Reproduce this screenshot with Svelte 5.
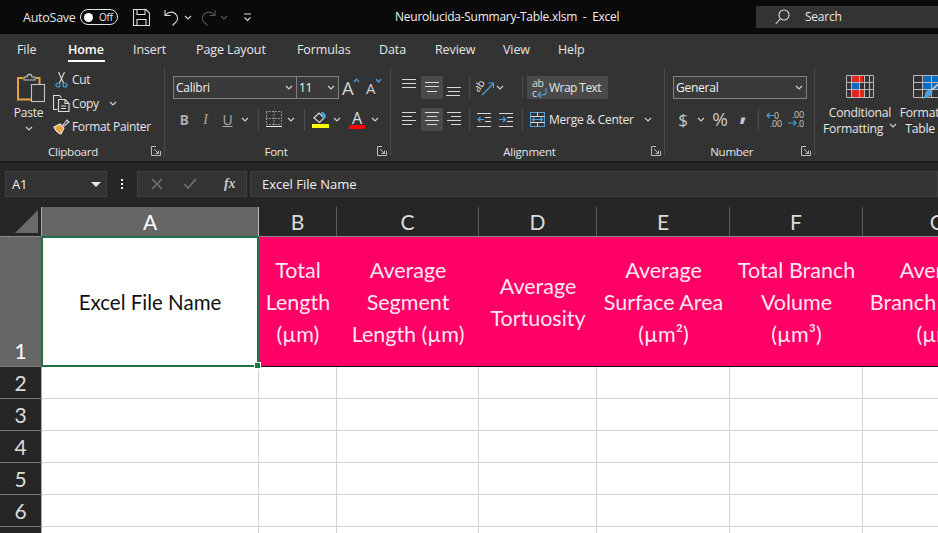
<script>
  const tabs = [
    { t: 'File', w: 51 }, { t: 'Home', w: 65, on: true }, { t: 'Insert', w: 63 }, { t: 'Page Layout', w: 101 },
    { t: 'Formulas', w: 82 }, { t: 'Data', w: 56 }, { t: 'Review', w: 68 }, { t: 'View', w: 55 }, { t: 'Help', w: 50 }
  ];
  const cols = [
    { l: 'A', w: 217, sel: true }, { l: 'B', w: 78 }, { l: 'C', w: 142 }, { l: 'D', w: 118 },
    { l: 'E', w: 133 }, { l: 'F', w: 133 }, { l: 'G', w: 150 }
  ];
  const head = [
    ['Total', 'Length', '(µm)'], ['Average', 'Segment', 'Length (µm)'], ['Average', 'Tortuosity'],
    ['Average', 'Surface Area', '(µm²)'], ['Total Branch', 'Volume', '(µm³)'], ['Average', 'Branch Length', '(µm)']
  ];
  const rows = [2, 3, 4, 5, 6, 7];
</script>

{#snippet chev()}
  <svg class="chev" width="8" height="5" viewBox="0 0 8 5"><path d="M1 1l3 3 3-3" /></svg>
{/snippet}
{#snippet launcher()}
  <svg class="launch" width="10" height="10" viewBox="0 0 10 10">
    <path d="M9.500 5v4.500H.5V.5h4.500" /><path d="M3 3l4.500 4.500M7.500 4.500v3h-3" />
  </svg>
{/snippet}
{#snippet lines(ys, xs)}
  <svg class="ln" width="18" height="23" viewBox="0 0 18 23">
    {#each ys as y, i}<path d="M{xs[i][0]} {y}.5H{xs[i][1]}" />{/each}
  </svg>
{/snippet}

<div class="app">
  <header class="title">
    <span class="autosave">AutoSave</span>
    <span class="toggle"><i></i><b>Off</b></span>
    <svg class="ic save" width="17" height="17" viewBox="0 0 17 17"><path d="M.5.5h12.500l3.500 3.500v12.500H.5zM4 .5v5h8v-5M4 16.500v-6h9v6" /></svg>
    <svg class="ic undo" width="16" height="17" viewBox="0 0 16 17"><path d="M1 1v5.500h5.500M1 6.500C4 3 8 2.500 11 4.500c3.500 2.500 3.500 7 0 9.500l-2.500 2.500" /></svg>
    {@render chev()}
    <svg class="ic redo" width="16" height="17" viewBox="0 0 16 17"><path d="M15 1v5.500H9.500M15 6.500C12 3 8 2.500 5 4.500c-3.500 2.500-3.500 7 0 9.500l2.500 2.500" /></svg>
    <svg class="chev dim" width="8" height="5" viewBox="0 0 8 5"><path d="M1 1l3 3 3-3" /></svg>
    <svg class="ic custom" width="9" height="9" viewBox="0 0 9 9"><path d="M1 1h7M1.500 4.500l3 3 3-3" /></svg>
    <span class="doc">Neurolucida-Summary-Table.xlsm &nbsp;-&nbsp; Excel</span>
    <div class="search">
      <svg class="ic" width="15" height="16" viewBox="0 0 15 16"><circle cx="9" cy="6" r="5" /><path d="M5.500 9.500L.8 15" /></svg>
      <span>Search</span>
    </div>
  </header>

  <nav class="tabs">
    {#each tabs as tab}
      <span class="tab" class:on={tab.on} style="width:{tab.w}px"><span>{tab.t}</span></span>
    {/each}
  </nav>

  <section class="ribbon">
    <div class="group clip">
      <div class="tools clip-tools">
        <div class="paste">
          <svg class="paste-ic" width="30" height="31" viewBox="0 0 30 31">
            <path class="orange" d="M7 6H2v21.500h13M20 6h3.500v6" />
            <path class="gray" d="M8 8V5h3c0-3.500 5-3.500 5 0h3v3z" />
            <rect class="gray" x="15.500" y="12.500" width="13" height="17" />
          </svg>
          <span>Paste</span>
          {@render chev()}
        </div>
        <div class="clip-list">
          <div class="row">
            <svg class="ic" width="17" height="17" viewBox="0 0 17 17">
              <path d="M5.500 1l5 11M11.500 1l-5 11" /><circle class="blue" cx="5" cy="14" r="2" /><circle class="blue" cx="12" cy="14" r="2" />
            </svg>
            <span>Cut</span>
          </div>
          <div class="row">
            <svg class="ic" width="17" height="17" viewBox="0 0 17 17">
              <path d="M4.500 14.500H.5V.5h6l2 2.500" /><path d="M5.500 4.500h6.500l4 4v8H5.500zM12 4.500v4h4M8 11h5M8 13.500h5" />
            </svg>
            <span>Copy</span>
            <span class="copy-chev">{@render chev()}</span>
          </div>
          <div class="row">
            <svg class="ic" width="17" height="17" viewBox="0 0 17 17">
              <path d="M10 7l4-5 2 2-5 4zM10 7l1 1" /><path class="painter" d="M1 9l6-3 4 4-3 6c-2 0-6-4-7-7z" />
            </svg>
            <span>Format Painter</span>
          </div>
        </div>
      </div>
      <div class="label"><i></i><span>Clipboard</span>{@render launcher()}</div>
    </div>

    <div class="group font">
      <div class="tools">
        <div class="font-top">
          <div class="combo c-font"><span>Calibri</span>{@render chev()}</div>
          <div class="combo c-size"><span>11</span>{@render chev()}</div>
          <span class="grow big">A<svg class="caret" width="7" height="5" viewBox="0 0 7 5"><path d="M1 4l2.500-3L6 4" /></svg></span>
          <span class="grow small">A<svg class="caret" width="7" height="5" viewBox="0 0 7 5"><path d="M1 1l2.500 3L6 1" /></svg></span>
        </div>
        <div class="font-bot">
          <b class="fmt">B</b><i class="fmt it">I</i><u class="fmt un">U</u>{@render chev()}
          <em class="sep"></em>
          <svg width="16" height="17" viewBox="0 0 16 17"><path class="dots" d="M.5.500h15v13H.5zM8 .5v13M.5 7.500h15" /><path class="ln-w" d="M0 15.500h16" /></svg>
          {@render chev()}
          <em class="sep"></em>
          <svg width="17" height="18" viewBox="0 0 17 18">
            <path class="ic-p" d="M2 7l5-5 5 5-4.500 4.500z" /><path class="blue-p" d="M9 1c3 0 5 2 5 5l-2 2-3-5z" /><rect class="yellow" x="0" y="13" width="17" height="4" />
          </svg>
          {@render chev()}
          <span class="fc"><span>A</span></span>
          {@render chev()}
        </div>
      </div>
      <div class="label"><i></i><span>Font</span>{@render launcher()}</div>
    </div>

    <div class="group align">
      <div class="tools">
        <div class="al-grid">
          <span class="ac">{@render lines([3, 7, 11], [[1, 15], [1, 15], [1, 15]])}</span>
          <span class="ac on">{@render lines([6, 10, 15], [[2, 16], [2, 16], [4, 14]])}</span>
          <span class="ac">{@render lines([11, 15, 19], [[2, 16], [3, 15], [1, 15]])}</span>
          <em class="sep"></em>
          <svg class="orient" width="18" height="20" viewBox="0 0 18 20">
            <text x="-2" y="12" transform="rotate(-55 3 9)">ab</text>
            <path class="blue" d="M6 17L17 6M12.500 5H17.500v5" />
          </svg>
          <span class="or-chev">{@render chev()}</span>
          <em class="sep"></em>
          <div class="wrap on">
            <svg class="wrap-ic" width="16" height="20" viewBox="0 0 16 20">
              <text x="0" y="9">ab</text><text x="0" y="19">c</text>
              <path class="blue" d="M14 10v4c0 2-1 3-3 3H6.500M9 14l-3 3 3 3" />
            </svg>
            <span class="wrap-txt">Wrap Text</span>
          </div>

          <span class="ac">{@render lines([4, 8, 12, 16], [[1, 15], [1, 11], [1, 15], [1, 11]])}</span>
          <span class="ac on">{@render lines([4, 8, 12, 16], [[2, 16], [4, 14], [2, 16], [4, 14]])}</span>
          <span class="ac">{@render lines([4, 8, 12, 16], [[2, 16], [6, 16], [2, 16], [6, 16]])}</span>
          <em class="sep"></em>
          <svg class="indent" width="15" height="16" viewBox="0 0 15 16"><path d="M0 1.500h14M8 5.500h6M8 9.500h6M0 14.500h14" /><path class="blue" d="M7 7.500H1M3.500 5l-2.500 2.500 2.500 2.500" /></svg>
          <svg class="indent" width="15" height="16" viewBox="0 0 15 16"><path d="M0 1.500h14M8 5.500h6M8 9.500h6M0 14.500h14" /><path class="blue" d="M0 7.500h6M4 5l2.500 2.500L4 10" /></svg>
          <em class="sep"></em>
          <div class="wrap merge">
            <svg class="merge-ic" width="15" height="15" viewBox="0 0 15 15">
              <path class="blue" d="M.5.500h14v14H.5z" /><path d="M.5 4.500h14M.5 10.500h14M7.500.5v4M7.500 10.500v4" /><path class="blue" d="M3 7.500h9M4.500 5.500l-2 2 2 2M10.500 5.500l2 2-2 2" />
            </svg>
            <span>Merge &amp; Center</span>
            {@render chev()}
          </div>
        </div>
      </div>
      <div class="label"><i></i><span>Alignment</span>{@render launcher()}</div>
    </div>

    <div class="group number">
      <div class="tools">
        <div class="combo c-num"><span>General</span>{@render chev()}</div>
        <div class="num-bot">
          <span class="sym dollar">$</span>
          {@render chev()}
          <span class="sym pct">%</span>
          <span class="sym comma">,</span>
          <em class="sep"></em>
          <svg class="dec" width="16" height="17" viewBox="0 0 16 17">
            <text x="8" y="8">0</text><text x="4" y="16">.00</text><path class="blue" d="M8 4.500H1M3.500 2L1 4.500 3.500 7" />
          </svg>
          <svg class="dec" width="16" height="17" viewBox="0 0 16 17">
            <text x="4" y="7">.00</text><text x="9" y="16">.0</text><path class="blue" d="M0 12h8M5.500 9.500L8 12l-2.500 2.500" />
          </svg>
        </div>
      </div>
      <div class="label"><i></i><span>Number</span>{@render launcher()}</div>
    </div>

    <div class="group styles">
      <div class="big-btn cf">
        <svg width="28" height="23" viewBox="0 0 28 23">
          <rect class="red" x="5" y="1" width="12" height="7" /><rect class="bl" x="5" y="8" width="8" height="7" /><rect class="red" x="5" y="15" width="14" height="7" />
          <path class="grid" d="M.5.500h27v22H.5zM.5 7.500h27M.5 14.500h27M5.500.5v22M13.500.5v22M18.500.5v22M23.500.5v22" />
        </svg>
        <span>Conditional</span>
        <span>Formatting {@render chev()}</span>
      </div>
      <div class="big-btn ft">
        <svg width="28" height="26" viewBox="0 0 28 26">
          <rect class="bl" x="9" y="8" width="19" height="7" /><rect class="bl" x="9" y="1" width="19" height="7" />
          <path class="grid" d="M.5.500h27v22H.5zM.5 7.500h27M.5 14.500h27M9.500.5v22M18.500.5v22" />
          <path class="brush" d="M28 7L16 17" /><path class="bl-p" d="M16 15c3 0 4 2 3 4-2 3-6 4-10 5 1-1 3-3 3-5s2-4 4-4z" />
        </svg>
        <span>Format as</span>
        <span>Table {@render chev()}</span>
      </div>
    </div>
  </section>

  <section class="fbar">
    <div class="name"><span>A1</span><svg width="10" height="5" viewBox="0 0 10 5"><path d="M0 0h10L5 5z" /></svg></div>
    <div class="kebab"><i></i><i></i><i></i></div>
    <div class="fbtns">
      <svg width="12" height="12" viewBox="0 0 12 12"><path d="M1 1l10 10M11 1L1 11" /></svg>
      <svg width="14" height="12" viewBox="0 0 14 12"><path d="M1 6l4 4 8-9" /></svg>
      <span>fx</span>
    </div>
    <div class="finput">Excel File Name</div>
  </section>

  <section class="sheet">
    <div class="line colhead">
      <div class="corner"><svg width="23" height="23" viewBox="0 0 23 23"><path d="M23 0v23H0z" /></svg></div>
      {#each cols as c}
        <div class="ch" class:sel={c.sel} style="width:{c.w}px">{c.l}</div>
      {/each}
    </div>
    <div class="line r1">
      <div class="rh sel">1</div>
      <div class="cell a1">Excel File Name<span class="handle"></span></div>
      {#each head as h, i}
        <div class="cell pink" style="width:{cols[i + 1].w}px">
          {#each h as l}<span>{l}</span>{/each}
        </div>
      {/each}
    </div>
    {#each rows as r}
      <div class="line rn">
        <div class="rh">{r}</div>
        {#each cols as c}<div class="cell blank" style="width:{c.w}px"></div>{/each}
      </div>
    {/each}
  </section>
</div>

<style>
  :global(body) { margin: 0; background: #fff; }
  .app {
    width: 938px; height: 533px; overflow: hidden; display: flex; flex-direction: column;
    font-family: "Open Sans", "Noto Sans", sans-serif; font-size: 12px; letter-spacing: -0.25px; color: #e6e6e6;
  }
  svg { display: block; flex: none; fill: none; }
  em { font-style: normal; }
  .chev path { stroke: #cfcfcf; stroke-width: 1.2; fill: none; }
  .chev.dim path { stroke: #555; }
  .ic path, .ic circle { stroke: #dcdcdc; stroke-width: 1.1; }
  .blue, .ic .blue { stroke: #4a9fdc; stroke-width: 1.2; fill: none; }

  /* title */
  .title { height: 34px; flex: none; background: #0a0a0a; display: flex; align-items: center; padding-left: 23px; position: relative; box-sizing: border-box; }
  .autosave { font-size: 12.500px; width: 57px; }
  .toggle { width: 38px; height: 16px; box-sizing: border-box; border: 1px solid #e6e6e6; border-radius: 9px; display: flex; align-items: center; padding-left: 3px; }
  .toggle i { width: 9px; height: 9px; border-radius: 50%; background: #fff; }
  .toggle b { font-weight: 400; font-size: 10px; margin-left: 6px; }
  .save { margin-left: 15px; }
  .undo { margin-left: 14px; margin-right: 4px; }
  .redo { margin-left: 8px; margin-right: 4px; }
  .redo path { stroke: #555; }
  .custom { margin-left: 15px; }
  .doc { position: absolute; left: 395px; top: 8px; font-size: 12px; color: #f0f0f0; }
  .search { margin-left: auto; width: 182px; height: 22px; margin-top: -1px; background: #333; display: flex; align-items: center; padding-left: 19px; box-sizing: border-box; gap: 15px; }
  .search span { font-size: 12px; }

  /* tabs */
  .tabs { height: 34px; flex: none; background: #333; display: flex; padding-left: 17px; box-sizing: border-box; }
  .tab { flex: none; display: block; padding-top: 7px; font-size: 12.500px; letter-spacing: -0.1px; box-sizing: border-box; }
  .tab span { display: inline-block; height: 18px; line-height: 18px; }
  .tab.on span { font-weight: 600; color: #fff; border-bottom: 2px solid #fff; padding-bottom: 1px; padding-right: 1px; }

  /* ribbon */
  .ribbon { height: 93px; flex: none; background: #333; display: flex; }
  .group { flex: none; display: flex; flex-direction: column; box-sizing: border-box; border-right: 1px solid #4a4a4a; height: 88px; }
  .tools { flex: 1; padding-top: 8px; box-sizing: border-box; min-height: 0; }
  .label { display: grid; grid-template-columns: 1fr auto 1fr; align-items: center; height: 18px; margin-bottom: -4px; font-size: 11.500px; padding-right: 3px; flex: none; }
  .launch { justify-self: end; }
  .launch path { stroke: #bdbdbd; stroke-width: 1; }
  .row { display: flex; align-items: center; height: 23.500px; gap: 2px; }

  .clip { width: 165px; }
  .clip .label { grid-template-columns: 48fr auto 63fr; }
  .clip-tools { display: flex; padding-top: 0; }
  .paste { width: 53px; display: flex; flex-direction: column; align-items: center; padding-left: 4px; padding-top: 4px; box-sizing: border-box; }
  .paste-ic { margin-left: 5px; }
  .paste span { margin-top: 1px; line-height: 18px; }
  .paste .chev { margin-top: 4px; }
  .orange { stroke: #e8a33d; stroke-width: 2; }
  .gray { stroke: #c4c4c4; stroke-width: 1.1; }
  .clip-list { letter-spacing: -0.35px; }
  .copy-chev { margin-left: 8px; }
  .painter { fill: #e8a33d; stroke: #e8e8e8 !important; }

  .font { width: 226px; }
  .font .tools { padding-left: 8px; }
  .font-top { display: flex; align-items: center; height: 23px; }
  .combo { height: 23px; box-sizing: border-box; border: 1px solid #808080; display: flex; align-items: center; justify-content: space-between; padding: 0 3px 0 2px; background: #3a3a3a; color: #f2f2f2; }
  .c-font { width: 124px; }
  .c-size { width: 43px; margin-left: -1px; }
  .grow { display: flex; color: #d0d0d0; line-height: 20px; }
  .grow.big { font-size: 18.500px; margin-left: 3px; width: 24px; }
  .grow.small { font-size: 15px; width: 18px; }
  .caret path { stroke: #4a9fdc; stroke-width: 1.2; }
  .font-bot { display: grid; grid-template-columns: 22px 21px 23px 12px 14px 18px 15px 12px 20px 14px 26px 9px; align-items: center; justify-items: center; height: 23px; margin-top: 9px; }
  .fmt { font-size: 14px; color: #aaa; font-style: normal; text-decoration: none; }
  .it { font-family: "Liberation Serif", serif; font-style: italic; font-weight: 400; }
  .un { text-decoration: underline; font-weight: 400; }
  .sep { display: block; width: 1px; height: 21px; background: #4f4f4f; }
  .dots { stroke: #e6e6e6; stroke-dasharray: 1 2; }
  .ln-w { stroke: #eee; }
  .ic-p { stroke: #ddd; fill: #333; stroke-width: 1.1; }
  .blue-p { fill: #4a9fdc; }
  .yellow { fill: #ffff00; }
  .fc { display: flex; flex-direction: column; align-items: center; width: 16px; }
  .fc span { font-size: 16px; line-height: 16px; color: #ddd; display: block; width: 16px; text-align: center; border-bottom: 4px solid #ff0000; height: 15px; }

  .align { width: 274px; padding-left: 7px; }
  .al-grid { display: grid; grid-template-columns: 23px 22px 21px 10px 21px 22px 10px auto; grid-template-rows: 23px 23px; row-gap: 9px; align-items: center; justify-items: center; }
  .ac { width: 100%; height: 23px; display: flex; align-items: center; justify-content: center; }
  .ac.on { background: #4a4a4a; }
  .ln path { stroke: #d8d8d8; stroke-width: 1; }
  .orient text { font-size: 10.500px; fill: #ddd; }
  .or-chev { justify-self: start; margin-left: 1px; }
  .wrap { justify-self: start; display: flex; align-items: center; height: 23px; width: 81px; padding-left: 5px; box-sizing: border-box; gap: 1px; }
  .wrap.on { background: #4a4a4a; }
  .wrap-txt { letter-spacing: -0.55px; }
  .wrap-ic text { font-size: 10.500px; fill: #ddd; }
  .indent path { stroke: #d8d8d8; }
  .indent .blue { stroke: #4a9fdc; stroke-width: 1.2; }
  .merge { width: 128px; padding-left: 3px; gap: 4px; }
  .merge .chev { margin-left: 6px; }
  .merge-ic path { stroke: #d8d8d8; }
  .merge-ic .blue { stroke: #4a9fdc; stroke-width: 1.2; }

  .number { width: 150px; padding-left: 8px; }
  .number .label { grid-template-columns: 38fr auto 59fr; }
  .c-num { width: 134px; }
  .num-bot { display: grid; grid-template-columns: 20px 16px 22px 24px 6px 25px 20px; margin-top: 9px; height: 23px; align-items: center; justify-items: center; }
  .sym { color: #c8c8c8; font-size: 17px; line-height: 23px; }
  .pct { font-size: 19px; }
  .comma { font-weight: 700; font-size: 27px; line-height: 14px; height: 23px; margin-top: -9px; }
  .dec text { font-size: 9px; fill: #ccc; }

  .styles { border: 0; flex-direction: row; padding-top: 7px; padding-left: 7px; }
  .big-btn { flex: none; display: flex; flex-direction: column; align-items: center; line-height: 16px; font-size: 12.200px; }
  .big-btn svg:first-child { margin-bottom: 7px; }
  .big-btn span { display: flex; align-items: center; gap: 3px; white-space: pre; }
  .cf { width: 76px; }
  .ft { width: 58px; }
  .ft svg:first-child { margin-bottom: 4px; }
  .red { fill: #e0281e; }
  .bl { fill: #0b6cc4; }
  .grid { stroke: #b8b8b8; stroke-width: 1; }
  .brush { stroke: #c4c4c4; stroke-width: 2; }
  .bl-p { fill: #4a9fdc; }

  /* formula */
  .fbar { height: 46px; flex: none; background: #262626; border-top: 2px solid #1b1b1b; box-sizing: border-box; display: flex; align-items: flex-start; padding: 8px 0 0 5px; }
  .name, .fbtns, .finput { height: 26px; box-sizing: border-box; background: #333; border: 1px solid #3f3f3f; display: flex; align-items: center; font-size: 13px; }
  .name { width: 102px; padding: 0 5px 0 6px; justify-content: space-between; color: #f0f0f0; }
  .name path { fill: #e8e8e8; }
  .kebab { width: 30px; height: 26px; display: flex; flex-direction: column; align-items: center; justify-content: center; gap: 2px; }
  .kebab i { width: 2px; height: 2px; background: #eee; }
  .fbtns { width: 110px; padding-left: 13px; gap: 20px; }
  .fbtns path { stroke: #666; stroke-width: 2; }
  .fbtns span { font-family: "Liberation Serif", serif; font-style: italic; font-weight: 700; margin-left: 7px; font-size: 14px; color: #c8c8c8; }
  .finput { margin-left: 3px; flex: 1; padding-left: 11px; letter-spacing: 0; color: #f0f0f0; }

  /* sheet */
  .sheet { flex: 1; background: #fff; font-family: Lato, "Liberation Sans", sans-serif; letter-spacing: 0; min-height: 0; }
  .line { display: flex; }
  .colhead { height: 30px; background: #262626; border-bottom: 1px solid #8a8a8a; box-sizing: border-box; }
  .corner { width: 42px; flex: none; display: flex; justify-content: flex-end; align-items: flex-end; box-sizing: border-box; padding: 0 3px 3px 0; border-right: 1px solid #aaa; }
  .corner path { fill: #6a6a6a; }
  .ch { flex: none; box-sizing: border-box; border-right: 1px solid #5a5a5a; display: flex; align-items: flex-end; justify-content: center; font-size: 21px; line-height: 29px; color: #dcdcdc; }
  .ch.sel { background: #666; border-right-color: #bbb; color: #fff; }
  .r1 { height: 130px; }
  .rn { height: 32px; }
  .rh { width: 42px; flex: none; box-sizing: border-box; background: #262626; border-right: 1px solid #aaa; border-bottom: 1px solid #777; display: flex; align-items: flex-end; justify-content: center; font-size: 21px; line-height: 30px; color: #dcdcdc; }
  .rh.sel { background: #666; color: #fff; }
  .cell { flex: none; box-sizing: border-box; }
  .blank { border-right: 1px solid #d4d4d4; border-bottom: 1px solid #d4d4d4; }
  .a1 { position: relative; background: #fff; color: #111; font-size: 20.500px; display: flex; align-items: center; justify-content: center; border: 2px solid #217346; margin: -1px 0 0 -1px; width: 218px; }
  .handle { position: absolute; right: -4px; bottom: -4px; width: 5px; height: 5px; background: #217346; border: 1px solid #fff; box-sizing: content-box; }
  .pink { background: #ff0066; color: #ffe6ef; font-size: 21.500px; line-height: 32px; border-bottom: 1px solid #111; display: flex; flex-direction: column; align-items: center; justify-content: center; white-space: nowrap; }
</style>
